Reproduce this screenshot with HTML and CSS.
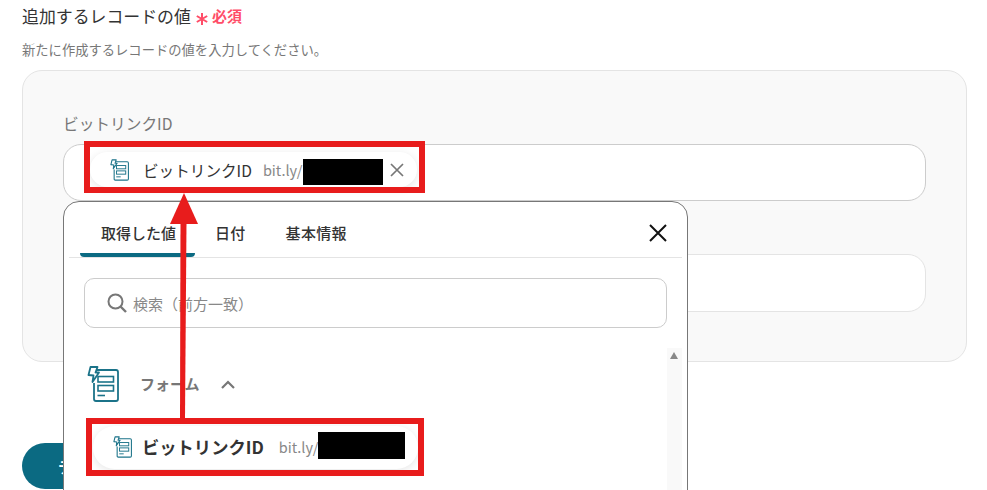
FILE: index.html
```html
<!DOCTYPE html>
<html lang="ja">
<head>
  <meta charset="UTF-8" />
  <meta name="viewport" content="width=device-width, initial-scale=1.0"/>
  <title>追加するレコードの値</title>
  <link rel="stylesheet" href="styles.css">
</head>
<body>

  <svg class="defs" width="0" height="0">
    <symbol id="formIcon" viewBox="0 0 32 36">
      <path d="M10 4 H29 Q31 4 31 6 V33 Q31 35 29 35 H9 Q7 35 7 33 V17" fill="none" stroke="#1b7389" stroke-width="1.8"/>
      <path d="M1.5 9 L3.5 1 H10.5 L8.5 6.5 H12 L5.5 16 L6.5 9.5 Z" fill="#fff" stroke="#1b7389" stroke-width="1.8" stroke-linejoin="round"/>
      <rect x="11" y="10.5" width="15.5" height="5.5" fill="none" stroke="#1b7389" stroke-width="1.6"/>
      <rect x="11" y="19.5" width="15.5" height="5.5" fill="none" stroke="#1b7389" stroke-width="1.6"/>
      <path d="M10.5 29.5 H18" stroke="#1b7389" stroke-width="1.6"/>
    </symbol>
  </svg>

  <div class="page">
    <div class="heading">
      <h2>追加するレコードの値</h2>
      <svg class="star" viewBox="0 0 12 12"><path d="M6 0 V12 M0.8 3 L11.2 9 M11.2 3 L0.8 9" stroke="#ff4d68" stroke-width="2"/></svg>
      <span class="required">必須</span>
    </div>
    <p class="hint">新たに作成するレコードの値を入力してください。</p>

    <div class="panel">
      <label>ビットリンクID</label>
      <div class="field">
        <div class="pill">
          <svg class="pill-icon"><use href="#formIcon"/></svg>
          <span class="pill-name">ビットリンクID</span>
          <span class="pill-value">bit.ly/</span>
          <span class="masked"></span>
          <svg class="pill-close" viewBox="0 0 14 14"><path d="M1 1 L13 13 M13 1 L1 13" stroke="#777" stroke-width="1.7"/></svg>
        </div>

        <div class="popup">
          <div class="tabs">
            <div class="tab active">取得した値</div>
            <div class="tab">日付</div>
            <div class="tab">基本情報</div>
            <svg class="popup-close" viewBox="0 0 18 18"><path d="M1 1 L17 17 M17 1 L1 17" stroke="#111" stroke-width="2"/></svg>
          </div>
          <div class="search">
            <svg class="search-icon" viewBox="0 0 20 20"><circle cx="8.5" cy="8.5" r="7" fill="none" stroke="#777" stroke-width="2"/><path d="M13.5 13.5 L19 19" stroke="#777" stroke-width="2.4"/></svg>
            <span>検索（前方一致）</span>
          </div>
          <div class="results">
            <div class="scroll"><span class="scroll-up"></span></div>
            <div class="group">
              <svg class="group-icon"><use href="#formIcon"/></svg>
              <span class="group-name">フォーム</span>
              <svg class="chevron" viewBox="0 0 14 9"><path d="M1 8 L7 2 L13 8" fill="none" stroke="#777" stroke-width="2.2"/></svg>
            </div>
            <div class="pill pill-result">
              <svg class="pill-icon"><use href="#formIcon"/></svg>
              <span class="pill-name">ビットリンクID</span>
              <span class="pill-value">bit.ly/</span>
              <span class="masked"></span>
            </div>
          </div>
        </div>
      </div>
      <div class="field field-light"></div>
    </div>

    <button class="btn">テスト</button>
  </div>

  <!-- annotations -->
  <div class="mark mark-top"></div>
  <div class="mark mark-bottom"></div>
  <svg class="arrow" width="30" height="226" viewBox="0 0 30 226">
    <path d="M10.5 30 H16.5 L15 225 H10 Z" fill="#e81c1c"/>
    <path d="M14 0 L28 31 H0 Z" fill="#e81c1c"/>
  </svg>

</body>
</html>
```

FILE: styles.css
```css
html, body {
  margin: 0;
  height: 490px;
  overflow: hidden;
}

body {
  font-family: 'Noto Sans CJK JP', 'Noto Sans', sans-serif;
  background: white;
  color: #333;
  position: relative;
}

.defs {
  display: block;
}

.page {
  padding: 4px 20px 0 22px;
}

.heading {
  display: flex;
  align-items: center;
  height: 22px;
}

h2 {
  margin: 0;
  font-size: 16.9px;
  font-weight: 400;
  color: #333;
}

.star {
  width: 12px;
  height: 12px;
  margin: 7px 0 0 5px;
}

.required {
  margin-left: 4px;
  font-size: 15px;
  font-weight: 700;
  color: #ff4d68;
}

.hint {
  margin: 14px 0 0;
  font-size: 13.3px;
  line-height: 20px;
  color: #777;
}

.panel {
  margin-top: 10px;
  height: 292px;
  box-sizing: border-box;
  padding: 43px 40px 0;
  background: #f9f9f9;
  border: 1px solid #e4e4e4;
  border-radius: 20px;
}

label {
  display: block;
  font-size: 15.7px;
  line-height: 20px;
  color: #777;
}

.field {
  position: relative;
  height: 57px;
  box-sizing: border-box;
  margin-top: 10px;
  padding: 7px 0 0 26px;
  background: white;
  border: 1px solid #ccc;
  border-radius: 18px;
}

.field-light {
  margin-top: 53px;
  height: 58px;
  border-color: #e4e4e4;
}

.pill {
  display: flex;
  align-items: center;
  width: 327px;
  height: 35px;
  box-sizing: border-box;
  padding-left: 20px;
  background: white;
  border-radius: 18px;
  box-shadow: 0 2px 8px rgba(0, 0, 0, 0.1);
}

.pill-icon {
  width: 19px;
  height: 22px;
  flex: none;
}

.pill-name {
  margin-left: 14px;
  font-size: 15.6px;
  color: #333;
}

.pill-value {
  margin-left: 11px;
  font-size: 14.5px;
  color: #888;
}

.masked {
  width: 80px;
  height: 26px;
  margin-top: 5px;
  background: black;
}

.pill-close {
  width: 14px;
  height: 14px;
  margin-left: 7px;
}

.popup {
  position: absolute;
  z-index: 2;
  left: -1px;
  top: 56px;
  width: 625px;
  height: 300px;
  box-sizing: border-box;
  padding: 0 5px;
  background: white;
  border: 1px solid #777;
  border-radius: 16px 16px 0 0;
}

.tabs {
  display: flex;
  position: relative;
  height: 55px;
  padding-left: 11px;
  border-bottom: 1px solid #e4e4e4;
}

.tab {
  padding: 21px 20px 0 20px;
  font-size: 15px;
  font-weight: 500;
  line-height: 20px;
  letter-spacing: 0.3px;
  white-space: nowrap;
  color: #333;
}

.tab.active {
  width: 115px;
  box-sizing: border-box;
  padding-left: 21px;
  padding-right: 0;
  height: 55px;
  letter-spacing: 0;
  border-bottom: 4px solid #0b6a82;
  border-radius: 4px;
}

.popup-close {
  position: absolute;
  right: 15px;
  top: 22px;
  width: 18px;
  height: 18px;
}

.search {
  display: flex;
  align-items: center;
  gap: 6px;
  height: 50px;
  box-sizing: border-box;
  margin: 20px 15px 0 15px;
  padding-left: 22px;
  border: 1px solid #ccc;
  border-radius: 10px;
  font-size: 15px;
  color: #888;
}

.search-icon {
  width: 20px;
  height: 20px;
}

.results {
  position: relative;
  padding: 38px 0 0 18px;
}

.scroll {
  position: absolute;
  right: 0;
  top: 20px;
  width: 15px;
  height: 160px;
  background: #f9f9f9;
}

.scroll-up {
  display: block;
  margin: 4px 0 0 3px;
  width: 0;
  border: 4.5px solid transparent;
  border-top: 0;
  border-bottom: 7px solid #888;
}

.group {
  display: flex;
  align-items: center;
  height: 36px;
}

.group-icon {
  width: 32px;
  height: 36px;
}

.group-name {
  margin-left: 21px;
  margin-bottom: 2px;
  font-size: 15px;
  font-weight: 700;
  color: #777;
}

.chevron {
  width: 14px;
  height: 9px;
  margin-left: 21px;
}

.pill-result {
  width: 325px;
  height: 43px;
  margin: 24px 0 0 6px;
  border-radius: 22px;
}

.pill-result .pill-icon {
  margin-bottom: 2px;
}

.pill-result .pill-name {
  margin-left: 10px;
  margin-bottom: 3px;
  font-size: 17.3px;
  font-weight: 700;
}

.pill-result .pill-value {
  margin-left: 15px;
  margin-bottom: 3px;
}

.pill-result .masked {
  width: 87px;
  height: 27px;
  margin-top: 0;
  margin-bottom: 4px;
}

.btn {
  display: block;
  margin-top: 81px;
  width: 180px;
  height: 46px;
  padding: 0 0 0 36px;
  text-align: left;
  background-color: #0b6a82;
  color: white;
  border: none;
  border-radius: 23px;
  font-family: inherit;
  font-size: 15px;
  font-weight: bold;
}

.mark {
  position: absolute;
  z-index: 3;
  box-sizing: border-box;
  border: 6px solid #e81c1c;
}

.mark-top {
  left: 84px;
  top: 141px;
  width: 341px;
  height: 52px;
}

.mark-bottom {
  left: 86px;
  top: 418px;
  width: 338px;
  height: 58px;
}

.arrow {
  position: absolute;
  z-index: 3;
  left: 170px;
  top: 193px;
}
```
